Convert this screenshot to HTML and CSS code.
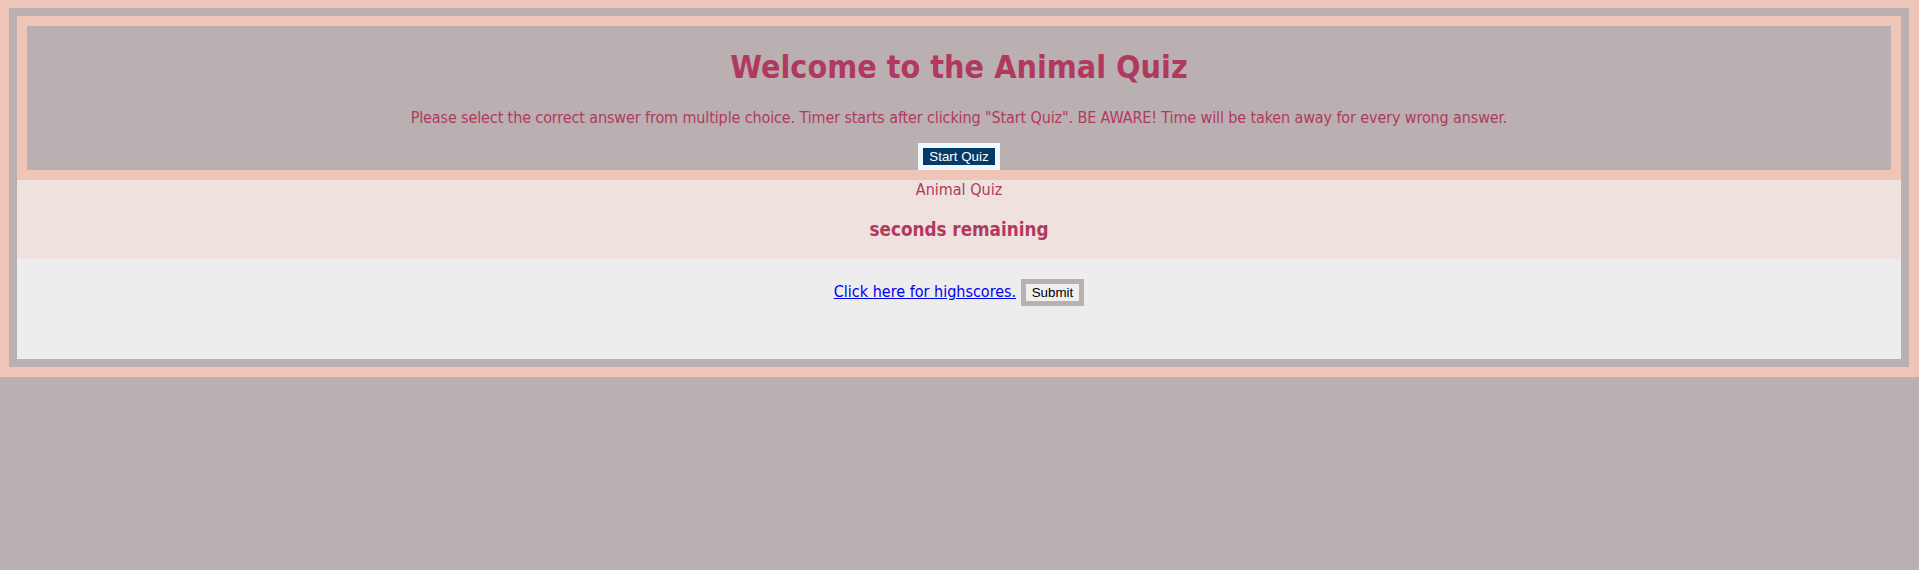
FILE: index.html
```html
<!DOCTYPE html>
<html lang="en">
<head>
<meta charset="utf-8">
<title>Animal Quiz</title>
<link rel="stylesheet" href="styles.css">
</head>
<body>
<div class="page">
  <div class="frame">
    <header class="header">
      <div class="header-inner">
        <h1 class="title">Welcome to the Animal Quiz</h1>
        <p class="intro">Please select the correct answer from multiple choice. Timer starts after clicking "Start Quiz". BE AWARE! Time will be taken away for every wrong answer.</p>
        <button class="start-btn" type="button">Start Quiz</button>
      </div>
    </header>
    <section class="timer">
      <div class="quiz-name">Animal Quiz</div>
      <h3 class="seconds">seconds remaining</h3>
    </section>
    <section class="scores">
      <a class="score-link" href="#">Click here for highscores.</a>
      <button class="submit-btn" type="button">Submit</button>
    </section>
  </div>
</div>
</body>
</html>
```

FILE: styles.css
```css
html, body {
  margin: 0;
  padding: 0;
}

body {
  background: #bab0b2;
  font-family: Tahoma, "DejaVu Sans Condensed", "DejaVu Sans", sans-serif;
  font-size: 16px;
  line-height: 1.308;
  color: #b1395f;
}

.page {
  background: #efc5b8;
  padding: 8px 10px 10px 9px;
}

.frame {
  border: 8px solid #bab0b2;
  background: #efe1de;
}

.header {
  background: #efc5b8;
  padding: 10px;
}

.header-inner {
  background: #bab0b2;
  display: flow-root;
  text-align: center;
}

.title {
  font-size: 32px;
  font-weight: bold;
  margin: 21.4px 0 19.1px;
}

.intro {
  font-size: 16px;
  letter-spacing: -0.12px;
  margin: 0 0 13.4px;
}

.start-btn {
  display: block;
  margin: 0 auto;
  font-family: "Liberation Sans", Arial, sans-serif;
  font-size: 13.33px;
  line-height: 15px;
  padding: 1px 6px;
  color: #ffffff;
  background: #063a66;
  border: 5px solid #f0f8ff;
  border-radius: 0;
}

.timer {
  display: flow-root;
  text-align: center;
}

.seconds {
  font-size: 18.72px;
  font-weight: bold;
  margin: 17.8px 0 16.1px;
}

.scores {
  background: #ededed;
  box-sizing: border-box;
  height: 100px;
  padding-top: 20px;
  text-align: center;
  line-height: 1.207;
}

.score-link {
  color: #0000ee;
  text-decoration: underline;
}

.submit-btn {
  font-family: "Liberation Sans", Arial, sans-serif;
  font-size: 13.33px;
  line-height: 15px;
  padding: 1px 6px;
  color: #000000;
  background: #efefef;
  border: 5px solid #bab0b2;
  border-radius: 0;
}
```
